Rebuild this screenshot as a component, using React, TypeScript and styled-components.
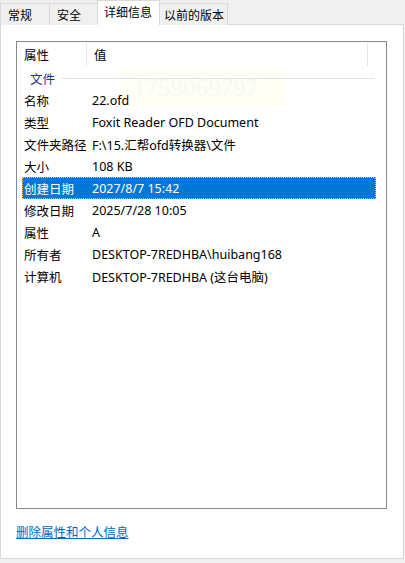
import styled, { createGlobalStyle } from "styled-components";

const GlobalStyle = createGlobalStyle`
  html, body {
    margin: 0;
    padding: 0;
    background: #f0f0f0;
  }
  body {
    font-family: "Noto Sans", "Noto Sans CJK SC", sans-serif;
    font-size: 12.5px;
    color: #000;
  }
`;

const Window = styled.div`
  width: 405px;
  height: 563px;
  background: #f0f0f0;
  display: flex;
  flex-direction: column;
  overflow: hidden;
  position: relative;
`;

const TabStrip = styled.div`
  display: flex;
  align-items: flex-end;
  height: 25px;
  position: relative;
  z-index: 1;
`;

const Tab = styled.div<{ $active?: boolean; $w: number; $pad?: number }>`
  box-sizing: border-box;
  width: ${(p) => p.$w}px;
  height: ${(p) => (p.$active ? 25 : 22)}px;
  margin-left: -1px;
  border: 1px solid #d9d9d9;
  border-bottom: ${(p) => (p.$active ? "1px solid #fff" : "none")};
  background: ${(p) => (p.$active ? "#fff" : "#f0f0f0")};
  display: flex;
  align-items: center;
  white-space: nowrap;
  padding-left: ${(p) => p.$pad ?? 7}px;
  padding-bottom: ${(p) => (p.$active ? 2 : 0)}px;
  font-size: 12px;
  &:first-child {
    margin-left: 0;
  }
`;

const Panel = styled.div`
  box-sizing: border-box;
  margin-top: -1px;
  width: 404px;
  height: 535px;
  background: #fff;
  border: 1px solid #d9d9d9;
  padding: 16px 15px 0 15px;
  display: flex;
  flex-direction: column;
`;

const ListView = styled.div`
  box-sizing: border-box;
  width: 371px;
  height: 468px;
  border: 1px solid #828790;
  background: #fff;
  position: relative;
  display: flex;
  flex-direction: column;
`;

const Header = styled.div`
  display: flex;
  height: 24px;
  align-items: stretch;
`;

const HeaderCell = styled.div<{ $w: number }>`
  box-sizing: border-box;
  width: ${(p) => p.$w}px;
  padding-left: 7px;
  display: flex;
  align-items: center;
  position: relative;
  &::after {
    content: "";
    position: absolute;
    right: 0;
    top: 1px;
    bottom: 0;
    width: 1px;
    background: #e5e5e5;
  }
`;

const Rows = styled.div`
  position: relative;
  padding-top: 1px;
`;

const Watermark = styled.div`
  position: absolute;
  left: 102px;
  top: 3px;
  width: 167px;
  height: 38px;
  background: #fffff6;
  color: #f9f9f1;
  font-family: "Liberation Serif", serif;
  font-size: 25px;
  line-height: 38px;
  padding-left: 14px;
  box-sizing: border-box;
  pointer-events: none;
  z-index: 0;
`;

const Group = styled.div`
  position: relative;
  z-index: 1;
  display: flex;
  align-items: center;
  height: 22px;
  padding-left: 13px;
  color: #1e3287;
  gap: 6px;
  width: 358px;
  box-sizing: border-box;
`;

const GroupLine = styled.div`
  flex: 1;
  height: 1px;
  background: #dde4ee;
`;

const Row = styled.div<{ $selected?: boolean }>`
  position: relative;
  z-index: 1;
  box-sizing: border-box;
  display: flex;
  align-items: center;
  height: 22px;
  margin-left: 5px;
  width: 354px;
  padding-left: 2px;
  background: ${(p) => (p.$selected ? "#0078d7" : "transparent")};
  color: ${(p) => (p.$selected ? "#fff" : "#000")};
  outline: ${(p) => (p.$selected ? "1px dotted #ffb36b" : "none")};
  outline-offset: -1px;
`;

const NameCell = styled.div`
  width: 68px;
  white-space: nowrap;
`;

const ValueCell = styled.div`
  white-space: nowrap;
`;

const LinkArea = styled.div`
  padding-top: 13px;
`;

const Link = styled.a`
  color: #0066cc;
  text-decoration: underline;
  font-size: 12.5px;
  cursor: pointer;
`;

const rows: [string, string][] = [
  ["名称", "22.ofd"],
  ["类型", "Foxit Reader OFD Document"],
  ["文件夹路径", "F:\\15.汇帮ofd转换器\\文件"],
  ["大小", "108 KB"],
  ["创建日期", "2027/8/7 15:42"],
  ["修改日期", "2025/7/28 10:05"],
  ["属性", "A"],
  ["所有者", "DESKTOP-7REDHBA\\huibang168"],
  ["计算机", "DESKTOP-7REDHBA (这台电脑)"],
];

export default function App() {
  return (
    <Window>
      <GlobalStyle />
      <TabStrip>
        <Tab $w={50}>常规</Tab>
        <Tab $w={49}>安全</Tab>
        <Tab $w={63} $pad={6} $active>
          详细信息
        </Tab>
        <Tab $w={69} $pad={4}>
          以前的版本
        </Tab>
      </TabStrip>
      <Panel>
        <ListView>
          <Header>
            <HeaderCell $w={70}>属性</HeaderCell>
            <HeaderCell $w={281}>值</HeaderCell>
          </Header>
          <Rows>
            <Watermark>1759069797</Watermark>
            <Group>
              文件
              <GroupLine />
            </Group>
            {rows.map(([name, value]) => (
              <Row key={name} $selected={name === "创建日期"}>
                <NameCell>{name}</NameCell>
                <ValueCell>{value}</ValueCell>
              </Row>
            ))}
          </Rows>
        </ListView>
        <LinkArea>
          <Link>删除属性和个人信息</Link>
        </LinkArea>
      </Panel>
    </Window>
  );
}
